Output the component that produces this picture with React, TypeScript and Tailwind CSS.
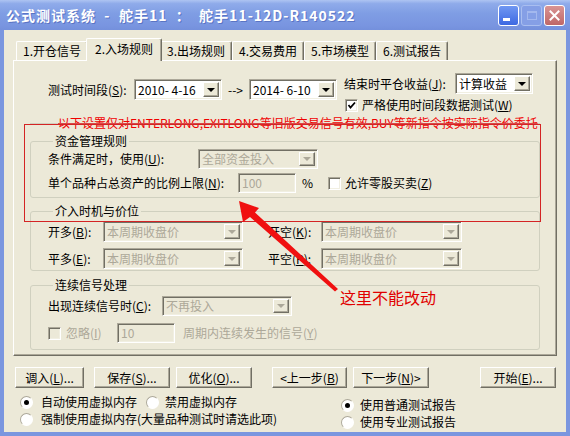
import type { ReactNode } from 'react'

const sunken =
  'border border-t-[#ACA899] border-l-[#ACA899] border-r-white border-b-white shadow-[inset_1px_1px_0_#716F64,inset_-1px_-1px_0_#F1EFE2]'
const raised =
  'border border-t-white border-l-white border-r-[#716F64] border-b-[#716F64] shadow-[inset_-1px_-1px_0_#ACA899]'

function Arrow({ disabled }: { disabled?: boolean }) {
  return (
    <div
      className={`w-[16px] my-[2px] mr-[2px] flex items-center justify-center bg-[#ECE9D8] ${raised}`}
    >
      <span
        className={`w-0 h-0 border-l-[4px] border-r-[4px] border-t-[4px] border-l-transparent border-r-transparent ${
          disabled ? 'border-t-[#ACA899]' : 'border-t-black'
        }`}
      />
    </div>
  )
}

function Combo({
  className,
  value,
  disabled,
}: {
  className: string
  value: string
  disabled?: boolean
}) {
  return (
    <div
      className={`flex shrink-0 ${sunken} ${className} ${
        disabled ? 'bg-[#ECE9D8] text-[#ACA899]' : 'bg-white text-black'
      }`}
    >
      <span className="flex-1 pl-[3px] whitespace-pre flex items-center">{value}</span>
      <Arrow disabled={disabled} />
    </div>
  )
}

function Field({ className, value }: { className: string; value: string }) {
  return (
    <div
      className={`shrink-0 flex items-center pl-[3px] bg-[#ECE9D8] text-[#ACA899] ${sunken} ${className}`}
    >
      {value}
    </div>
  )
}

function Check({ checked, disabled }: { checked?: boolean; disabled?: boolean }) {
  return (
    <span
      className={`w-[13px] h-[13px] shrink-0 flex items-center justify-center ${sunken} ${
        disabled ? 'bg-[#ECE9D8]' : 'bg-white'
      }`}
    >
      {checked && (
        <svg width="9" height="9" viewBox="0 0 9 9">
          <polyline points="1.5,4 3.5,6.5 8,1.5" fill="none" stroke="#000" strokeWidth="1.8" />
        </svg>
      )}
    </span>
  )
}

function Radio({ checked }: { checked?: boolean }) {
  return (
    <span className="w-[13px] h-[13px] shrink-0 rounded-full bg-white border border-t-[#ACA899] border-l-[#ACA899] border-r-white border-b-white flex items-center justify-center">
      {checked && <span className="w-[5px] h-[5px] rounded-full bg-black" />}
    </span>
  )
}

function Btn({ className, children }: { className: string; children: ReactNode }) {
  return (
    <div
      className={`h-[21px] shrink-0 flex items-center justify-center bg-[#ECE9D8] ${raised} ${className}`}
    >
      {children}
    </div>
  )
}

function Group({
  title,
  className,
  children,
}: {
  title: string
  className: string
  children: ReactNode
}) {
  return (
    <fieldset
      className={`ml-[16px] w-[510px] border border-[#D0D0BF] rounded-[3px] pl-[17px] ${className}`}
    >
      <legend className="ml-[5px] px-[2px] leading-[14px]">{title}</legend>
      {children}
    </fieldset>
  )
}

const tabs = ['1.开仓信号', '2.入场规则', '3.出场规则', '4.交易费用', '5.市场模型', '6.测试报告']

export default function App() {
  return (
    <div className="relative w-[570px] h-[436px] flex flex-col bg-[#7A96DF] overflow-hidden font-['Noto_Sans_CJK_SC',sans-serif] text-[12px] leading-[14px] text-black">
      {/* title bar */}
      <div className="h-[30px] shrink-0 flex items-center pl-[6px] pr-[5px] bg-[linear-gradient(to_bottom,#AEC4F2_0%,#8FABEA_12%,#7F9DE4_45%,#7995E0_85%,#7490DC_100%)]">
        <span className="flex-1 text-white text-[14px] font-bold tracking-[1px] whitespace-pre [text-shadow:1px_1px_0_#5A74C4]">
          公式测试系统  -  舵手11  ：  舵手11-12D-R140522
        </span>
        <div className="w-[21px] h-[21px] rounded-[3px] border border-white bg-[linear-gradient(to_bottom,#7097F2,#3D69E2)] flex items-end pl-[4px] pb-[4px]">
          <span className="w-[7px] h-[3px] bg-white" />
        </div>
        <div className="ml-[2px] w-[21px] h-[21px] rounded-[3px] border border-[#A9BEF0] bg-[#859FE6] flex items-center justify-center">
          <span className="w-[10px] h-[9px] border border-[#A3B8EE] border-t-2" />
        </div>
        <div className="ml-[2px] w-[21px] h-[21px] rounded-[3px] border border-white bg-[linear-gradient(to_bottom,#D99494,#BF6767)] flex items-center justify-center">
          <svg width="11" height="11" viewBox="0 0 11 11">
            <path d="M1.5 1.5 L9.5 9.5 M9.5 1.5 L1.5 9.5" stroke="#fff" strokeWidth="2" strokeLinecap="square" />
          </svg>
        </div>
      </div>

      {/* body */}
      <div className="flex-1 mx-[4px] mb-[4px] bg-[#ECE9D8] flex flex-col">
        {/* tabs */}
        <div className="relative z-10 flex items-end h-[23px] mt-[8px] -mb-px ml-[12px]">
          {tabs.map((t, i) =>
            i === 1 ? (
              <div
                key={t}
                className="w-[76px] -mx-[2px] h-[23px] pb-[3px] flex items-center justify-center bg-[#ECE9D8] rounded-t-[2px] border-t border-l border-r border-t-white border-l-white border-r-[#716F64] shadow-[inset_-1px_0_0_#ACA899] relative z-10"
              >
                {t}
              </div>
            ) : (
              <div
                key={t}
                className="w-[72px] h-[19px] mb-px flex items-center justify-center bg-[#ECE9D8] rounded-t-[2px] border-t border-l border-r border-t-white border-l-white border-r-[#716F64] shadow-[inset_-1px_0_0_#ACA899]"
              >
                {t}
              </div>
            )
          )}
        </div>

        {/* tab panel */}
        <div className={`ml-[9px] w-[544px] h-[296px] flex flex-col ${raised}`}>
          <div className="flex items-start mt-[12px] pl-[34px]">
            <div className="flex items-center mt-[6px]">
              <span className="w-[86px]">
                测试时间段(<u>S</u>):
              </span>
              <Combo className="w-[88px] h-[21px]" value="2010- 4-16" />
              <span className="w-[27px] text-center">--&gt;</span>
              <Combo className="w-[88px] h-[21px]" value="2014- 6-10" />
            </div>
            <div className="ml-[7px] flex flex-col">
              <div className="flex items-center">
                <span className="w-[111px]">
                  结束时平仓收益(<u>J</u>):
                </span>
                <Combo className="w-[78px] h-[21px]" value="计算收益" />
              </div>
              <div className="flex items-center mt-[4px] ml-[1px]">
                <Check checked />
                <span className="ml-[4px]">
                  严格使用时间段数据测试(<u>W</u>)
                </span>
              </div>
            </div>
          </div>

          <div className="ml-[16px] w-[510px] mt-[4px] h-[14px] flex items-center">
            <div className="w-[28px] h-px bg-[#D0D0BF]" />
            <span className="text-[#F00000] whitespace-nowrap line-through decoration-[#D84848]">
              以下设置仅对ENTERLONG,EXITLONG等旧版交易信号有效,BUY等新指令按实际指令价委托
            </span>
            <div className="flex-1 h-px bg-[#D0D0BF]" />
          </div>

          <Group title="资金管理规则" className="mt-[4px] pb-[4px]">
            <div className="flex items-center mt-[1px] h-[20px]">
              <span className="w-[150px]">
                条件满足时，使用(<u>U</u>):
              </span>
              <Combo className="w-[120px] h-[20px]" value="全部资金投入" disabled />
            </div>
            <div className="flex items-center mt-[4px] h-[20px]">
              <span className="w-[190px]">
                单个品种占总资产的比例上限(<u>N</u>):
              </span>
              <Field className="w-[58px] h-[20px]" value="100" />
              <span className="ml-[6px] w-[26px]">%</span>
              <Check />
              <span className="ml-[4px]">
                允许零股买卖(<u>Z</u>)
              </span>
            </div>
          </Group>

          <Group title="介入时机与价位" className="mt-[6px] pb-[1px]">
            <div className="flex items-center mt-[3px] h-[21px]">
              <span className="w-[55px]">
                开多(<u>B</u>):
              </span>
              <Combo className="w-[140px] h-[21px]" value="本周期收盘价" disabled />
              <span className="ml-[25px] w-[53px]">
                开空(<u>K</u>):
              </span>
              <Combo className="w-[141px] h-[21px]" value="本周期收盘价" disabled />
            </div>
            <div className="flex items-center mt-[6px] h-[21px]">
              <span className="w-[55px]">
                平多(<u>E</u>):
              </span>
              <Combo className="w-[140px] h-[21px]" value="本周期收盘价" disabled />
              <span className="ml-[25px] w-[53px]">
                平空(<u>P</u>):
              </span>
              <Combo className="w-[141px] h-[21px]" value="本周期收盘价" disabled />
            </div>
          </Group>

          <Group title="连续信号处理" className="mt-[7px] pb-[6px]">
            <div className="flex items-center mt-[4px] h-[20px]">
              <span className="w-[114px]">
                出现连续信号时(<u>C</u>):
              </span>
              <Combo className="w-[130px] h-[20px]" value="不再投入" disabled />
            </div>
            <div className="flex items-center mt-[7px] h-[20px] text-[#ACA899]">
              <Check disabled />
              <span className="ml-[5px] w-[51px]">
                忽略(<u>I</u>)
              </span>
              <Field className="w-[58px] h-[20px]" value="10" />
              <span className="ml-[8px]">
                周期内连续发生的信号(<u>Y</u>)
              </span>
            </div>
          </Group>
        </div>

        {/* buttons */}
        <div className="flex items-center mt-[11px] pl-[11px]">
          <Btn className="w-[69px]">
            调入(<u>L</u>)...
          </Btn>
          <Btn className="w-[76px] ml-[10px]">
            保存(<u>S</u>)...
          </Btn>
          <Btn className="w-[76px] ml-[6px]">
            优化(<u>O</u>)...
          </Btn>
          <Btn className="w-[75px] ml-[20px]">
            &lt;上一步(<u>B</u>)
          </Btn>
          <Btn className="w-[76px] ml-[6px]">
            下一步(<u>N</u>)&gt;
          </Btn>
          <Btn className="w-[76px] ml-[51px]">
            开始(<u>E</u>)...
          </Btn>
        </div>

        {/* options */}
        <div className="flex items-start mt-[7px] pl-[16px]">
          <div className="w-[321px] flex flex-col">
            <div className="flex items-center h-[14px]">
              <Radio checked />
              <span className="ml-[8px] w-[96px]">自动使用虚拟内存</span>
              <span className="ml-[9px]">
                <Radio />
              </span>
              <span className="ml-[6px]">禁用虚拟内存</span>
            </div>
            <div className="flex items-center h-[14px] mt-[3px]">
              <Radio />
              <span className="ml-[8px]">强制使用虚拟内存(大量品种测试时请选此项)</span>
            </div>
          </div>
          <div className="flex flex-col mt-[3px]">
            <div className="flex items-center h-[14px]">
              <Radio checked />
              <span className="ml-[6px]">使用普通测试报告</span>
            </div>
            <div className="flex items-center h-[14px] mt-[3px]">
              <Radio />
              <span className="ml-[6px]">使用专业测试报告</span>
            </div>
          </div>
        </div>
      </div>

      {/* annotation overlay */}
      <svg className="absolute inset-0 pointer-events-none" width="570" height="436">
        <rect x="24.5" y="124.5" width="516" height="97" fill="none" stroke="#D42424" strokeWidth="1" />
        <polygon
          points="239,201 259,208 255,212.5 338,289 335,291.5 250,217 243,222"
          fill="#F01010"
        />
      </svg>
      <span className="absolute left-[340px] top-[287px] text-[16px] leading-[20px] text-[#E00000] pointer-events-none">
        这里不能改动
      </span>
    </div>
  )
}
